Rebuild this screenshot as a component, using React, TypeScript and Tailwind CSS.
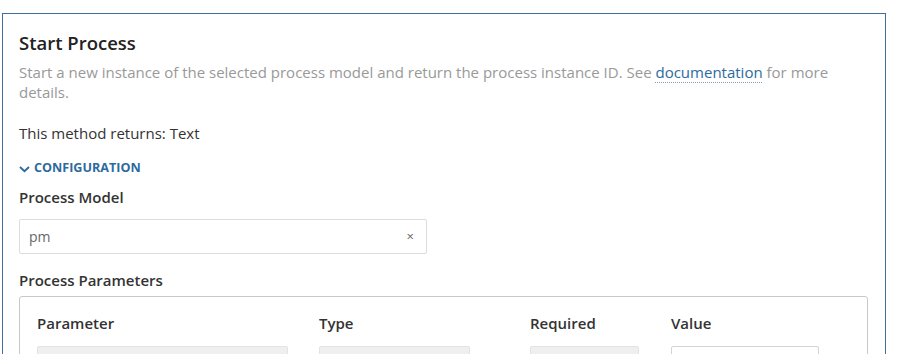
import React from "react";

export default function App() {
  return (
    <div className="w-[910px] h-[354px] overflow-hidden bg-white" style={{ fontFamily: '"Open Sans", sans-serif' }}>
      <div className="ml-[2px] mt-[13px] w-[884px] h-[400px] border border-[#3f6f98] pl-[16px] pt-[18px]">
        <div className="text-[18.5px] leading-[22px] font-semibold text-[#222]">Start Process</div>
        <div className="mt-[8px] text-[15px] leading-[20px] text-[#999] w-[849px]">
          Start a new instance of the selected process model and return the process instance ID. See{" "}
          <span className="text-[#2d6aa0] underline decoration-dotted decoration-1 decoration-[#7f9fbd] underline-offset-[4px]">documentation</span>{" "}
          for more details.
        </div>
        <div className="mt-[21px] text-[15px] leading-[20px] text-[#333]">This method returns: Text</div>
        <div className="mt-[18px] flex items-center gap-[4px] text-[12.6px] leading-[14px] font-bold text-[#2d6aa0]">
          <svg width="11" height="8" viewBox="0 0 11 8" className="mt-[1px]">
            <path d="M1 2 L5.5 6.3 L10 2" fill="none" stroke="#2d6aa0" strokeWidth="1.9" />
          </svg>
          CONFIGURATION
        </div>
        <div className="mt-[12px] text-[15px] leading-[20px] font-semibold text-[#333]">Process Model</div>
        <div className="mt-[12px] w-[408px] h-[35px] border border-[#dcdcdc] rounded-[2px] flex items-center justify-between pl-[9px] pr-[12px]">
          <span className="text-[14px] text-[#666]">pm</span>
          <span className="text-[13px] text-[#666] leading-none">×</span>
        </div>
        <div className="mt-[16px] text-[15px] leading-[20px] font-semibold text-[#333]">Process Parameters</div>
        <div className="mt-[6px] w-[849px] h-[120px] border border-[#c8c8c8] rounded-[3px] pl-[17px] pt-[16px]">
          <div className="flex text-[15px] leading-[20px] font-semibold text-[#333]">
            <div className="w-[282px]">Parameter</div>
            <div className="w-[211px]">Type</div>
            <div className="w-[141px]">Required</div>
            <div>Value</div>
          </div>
          <div className="mt-[13px] flex">
            <div className="w-[251px] h-[30px] bg-[#efefef] border border-[#e3e3e3] rounded-[2px] mr-[31px]"></div>
            <div className="w-[151px] h-[30px] bg-[#efefef] border border-[#e3e3e3] rounded-[2px] mr-[60px]"></div>
            <div className="w-[109px] h-[30px] bg-[#efefef] border border-[#e3e3e3] rounded-[2px] mr-[32px]"></div>
            <div className="w-[148px] h-[30px] bg-white border border-[#d4d4d4] rounded-[2px]"></div>
          </div>
        </div>
      </div>
    </div>
  );
}
